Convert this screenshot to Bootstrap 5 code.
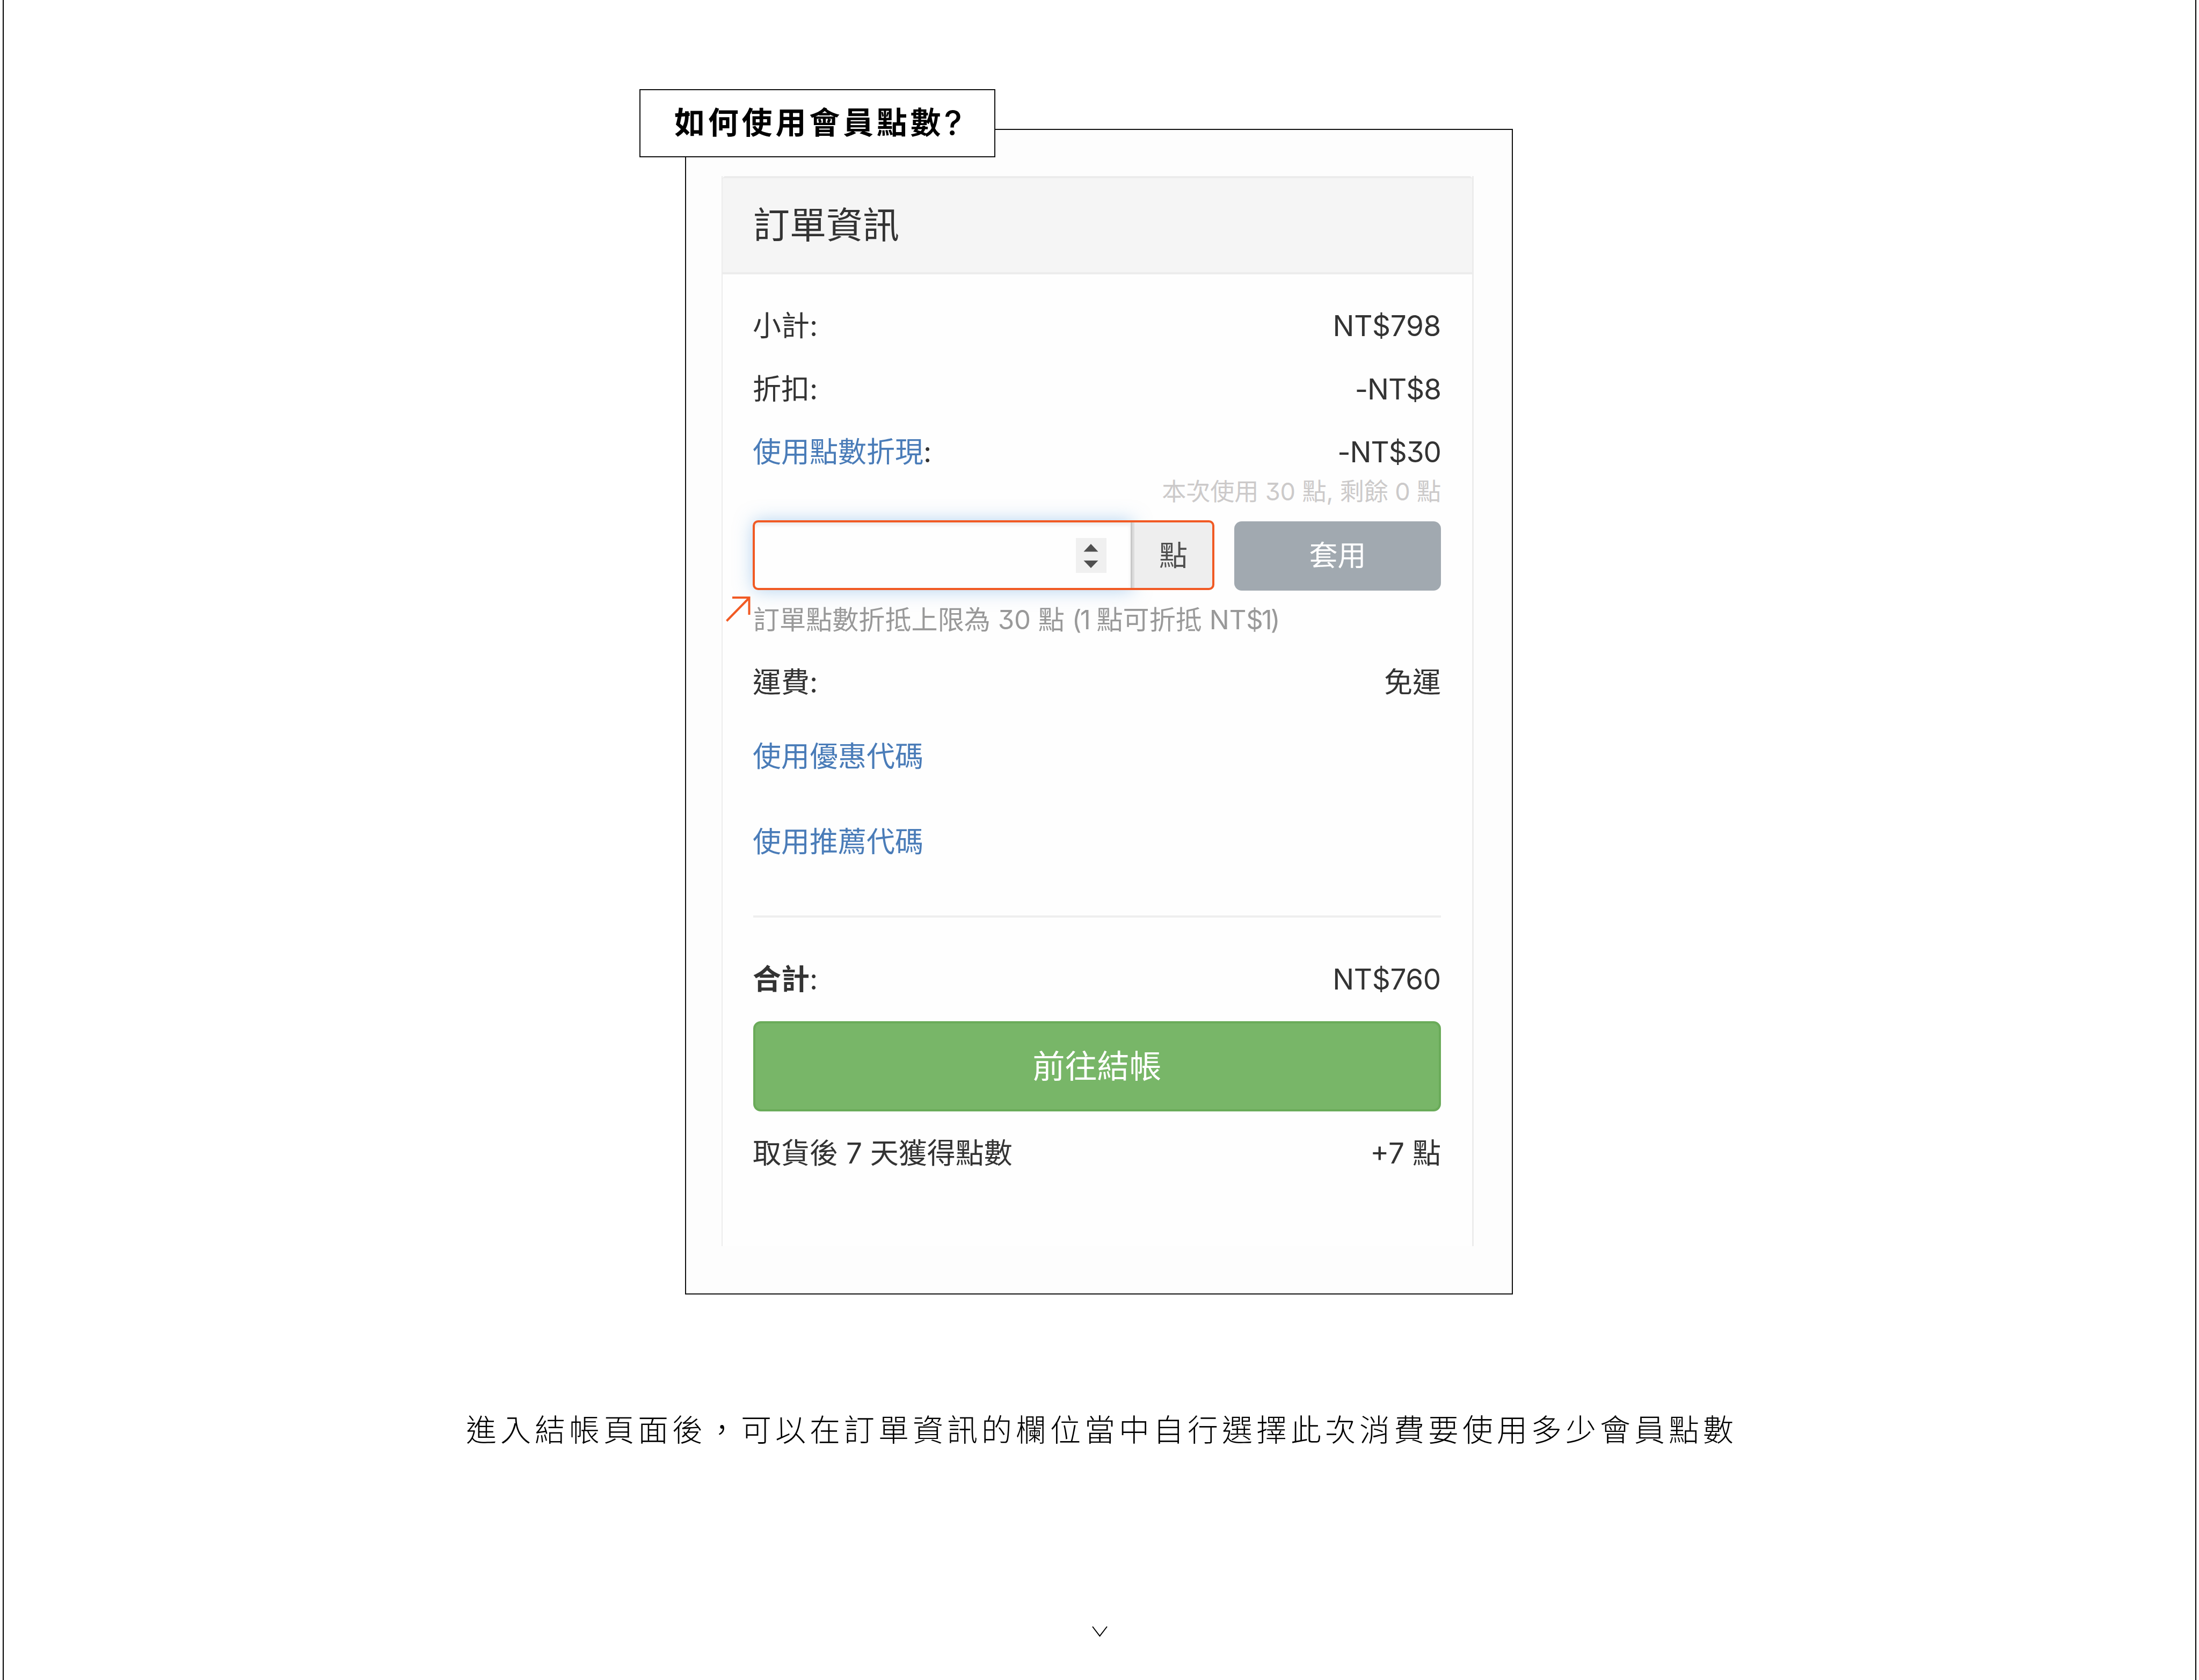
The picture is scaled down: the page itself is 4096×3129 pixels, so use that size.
<!DOCTYPE html>
<html lang="zh-Hant">
<head>
    <meta charset="UTF-8">
    <meta name="viewport" content="width=device-width, initial-scale=1.0">
    <title>如何使用會員點數?</title>
    <link rel="stylesheet" href="https://cdn.jsdelivr.net/npm/bootstrap@5.3.2/dist/css/bootstrap.min.css">
    <style>
        body {
            font-family: Inter, "Noto Sans CJK TC", sans-serif;
            font-feature-settings: "cv09";
            font-size: 53px;
            line-height: 76px;
            color: #333;
            background: #fff;
        }
        .page {
            height: 3129px;
            margin: 0 5px;
            padding-top: 240px;
            border-left: 2px solid #000;
            border-right: 2px solid #000;
            overflow: hidden;
        }
        .frame {
            width: 1542px;
            height: 2171px;
            margin-left: 1269px;
            padding: 86px 71px 0 66px;
            border: 2px solid #111;
            background: #fdfdfd;
        }
        /* Title sits over the frame's top left corner */
        .frame-title {
            top: -76px;
            left: -87px;
            width: 663px;
            height: 127px;
            padding-left: 63px;
            border: 2px solid #111;
            background: #fff;
            color: #000;
            font-size: 57px;
            font-weight: 700;
            letter-spacing: 5.8px;
        }
        .query {
            font-size: 63px;
            font-weight: 500;
        }
        .order {
            height: 1993px;
            border: 0 solid #ececec;
            border-width: 0 3px 0 2px;
            border-radius: 0;
            background: #fefefe;
        }
        .order-head {
            height: 183px;
            padding: 0 57px 2px;
            border: 0 solid #ececec;
            border-width: 4px 0;
            border-radius: 0;
            background: #f5f5f5;
            font-size: 68px;
        }
        .order-body {
            padding: 58px 58px 0 57px;
        }
        .order-body a {
            color: #4a7cb8;
            text-decoration: none;
        }
        .line-gap { margin-bottom: 41.5px; }
        .item { margin-left: -1px; }
        .amount { letter-spacing: -.3px; }
        .minus { letter-spacing: -1px; }
        .used-note {
            margin: 6px 0 24px;
            line-height: 60px;
            font-size: 45.2px;
            letter-spacing: -.2px;
            color: #cccaca;
        }
        .points-row { height: 130px; }
        .points-field {
            width: 859px;
            height: 129px;
        }
        .points-field::after {
            content: "";
            position: absolute;
            inset: -1px 0 0 -1px;
            z-index: 6;
            border: 4px solid #f15a24;
            border-radius: 10px;
        }
        .points-input {
            width: 707px;
            height: 129px;
            padding-right: 45px;
            border-right: 4px solid #c8c8c8;
            border-radius: 10px 0 0 10px;
            background: #fefefe;
            box-shadow: inset 0 8px 6px rgba(0, 0, 0, .07), 0 0 34px rgba(102, 165, 225, .5);
        }
        .points-unit {
            padding: 2px 4px 0 0;
            border: 0;
            border-left: 4px solid #dcdcdc;
            border-radius: 0 10px 10px 0;
            background: #eee;
            color: #505050;
            font-size: 53px;
        }
        .spin {
            width: 57px;
            height: 65px;
            background: #f0f0f0;
        }
        .apply {
            width: 385px;
            height: 129px;
            margin-top: 1px;
            padding: 0;
            border: 0;
            border-radius: 14px;
            background: #a1a9b0;
            color: #fff;
            font-size: 53px;
        }
        .pointer {
            left: -51px;
            top: 141px;
        }
        .limit-note {
            margin: 24px 0 49px;
            line-height: 60px;
            font-size: 49.1px;
            color: #999;
        }
        .one {
            margin-left: -3px;
            letter-spacing: -3px;
        }
        .coupon { margin-top: 61.5px; }
        .referral { margin-top: 83px; }
        .rule {
            height: 4px;
            margin: 99px 0 77px;
            border: 0;
            background: #eee;
            opacity: 1;
        }
        .checkout {
            height: 168px;
            margin: 40px 0;
            border: 4px solid #6aab59;
            border-radius: 14px;
            background: #78b668;
            color: #fff;
            font-size: 60px;
        }
        .caption-text {
            margin-top: 213px;
            padding-left: 861px;
            line-height: 80px;
            color: #000;
            font-size: 57px;
            font-weight: 300;
            letter-spacing: 7px;
        }
        .more { margin: 324px 0 0 2026px; }
    </style>
</head>
<body>
    <main class="page">
        <section class="frame position-relative">
            <h1 class="frame-title position-absolute d-flex align-items-center m-0 text-nowrap">如何使用會員點數<span class="query">?</span></h1>

            <div class="order card">
                <div class="order-head card-header d-flex align-items-center">訂單資訊</div>
                <div class="order-body card-body">
                    <div class="d-flex justify-content-between line-gap"><span class="item">小計:</span><span class="amount">NT$798</span></div>
                    <div class="d-flex justify-content-between line-gap"><span class="item">折扣:</span><span class="minus">-NT$8</span></div>
                    <div class="d-flex justify-content-between"><span class="item"><a href="#">使用點數折現</a>:</span><span class="minus">-NT$30</span></div>
                    <div class="used-note text-end">本次使用 30 點, 剩餘 0 點</div>

                    <div class="points-row d-flex justify-content-between position-relative">
                        <div class="points-field input-group flex-nowrap position-relative">
                            <div class="points-input d-flex align-items-center justify-content-end">
                                <div class="spin">
                                    <svg class="d-block" width="57" height="65" viewBox="0 0 57 65" fill="#505050">
                                        <path d="M28 11 41.500 25.500H14.500zM28 56 41.500 42H14.500z"/>
                                    </svg>
                                </div>
                            </div>
                            <span class="points-unit input-group-text flex-grow-1 justify-content-center">點</span>
                        </div>
                        <button type="button" class="apply btn">套用</button>
                        <svg class="pointer position-absolute" width="46" height="47" viewBox="0 0 46 47" fill="none" stroke="#f15a24" stroke-width="4">
                            <path d="M1.500 45.500 43 3M12 2H43.500V34"/>
                        </svg>
                    </div>
                    <div class="limit-note">訂單點數折抵上限為 30 點 (<span class="one">1</span> 點可折抵 NT$<span class="one">1</span>)</div>

                    <div class="d-flex justify-content-between"><span class="item">運費:</span><span>免運</span></div>
                    <div class="coupon"><a href="#" class="item">使用優惠代碼</a></div>
                    <div class="referral"><a href="#" class="item">使用推薦代碼</a></div>
                    <hr class="rule">
                    <div class="d-flex justify-content-between"><span class="item"><b>合計</b>:</span><span class="amount">NT$760</span></div>
                    <button type="button" class="checkout btn w-100 d-flex align-items-center justify-content-center">前往結帳</button>
                    <div class="d-flex justify-content-between"><span class="item">取貨後 7 天獲得點數</span><span>+7 點</span></div>
                </div>
            </div>
        </section>

        <p class="caption-text mb-0 text-nowrap">進入結帳頁面後，可以在訂單資訊的欄位當中自行選擇此次消費要使用多少會員點數</p>
        <svg class="more d-block" width="32" height="22" viewBox="0 0 32 22" fill="none" stroke="#000" stroke-width="2">
            <path d="M2 1.500 15.500 19 29 1.500"/>
        </svg>
    </main>
    <script src="https://cdn.jsdelivr.net/npm/bootstrap@5.3.2/dist/js/bootstrap.bundle.min.js"></script>
</body>
</html>
